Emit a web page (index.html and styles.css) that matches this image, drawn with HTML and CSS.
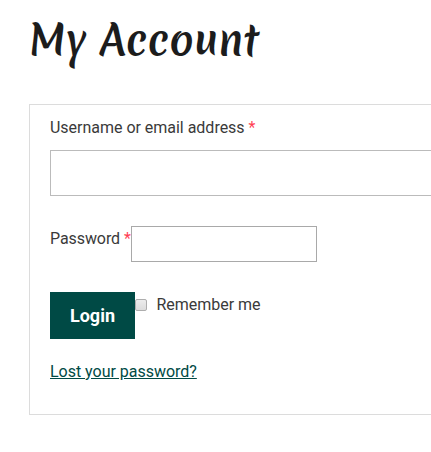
FILE: index.html
```html
<!DOCTYPE html>
<html lang="en">
<head>
<meta charset="utf-8">
<title>My Account</title>
<link rel="stylesheet" href="styles.css">
</head>
<body>
<main class="account">
  <h1 class="title">My Account</h1>
  <form class="login">
    <div class="field">
      <label for="username">Username or email address <span class="required">*</span></label>
      <input class="input input-wide" id="username" type="text">
    </div>
    <div class="password-row">
      <label class="password-label" for="password">Password <span class="required">*</span></label>
      <input class="input input-password" id="password" type="password">
    </div>
    <div class="actions">
      <button class="button" type="button">Login</button>
      <label class="remember"><input class="checkbox" type="checkbox"><span>Remember me</span></label>
    </div>
    <a class="lost" href="#">Lost your password?</a>
  </form>
</main>
</body>
</html>
```

FILE: styles.css
```css
* {
  box-sizing: border-box;
}

body {
  margin: 0;
  background: #fff;
  color: #3a3a3a;
  font: 400 16px/26px Roboto, sans-serif;
  letter-spacing: -0.02px;
}

.account {
  padding: 10px 0 0 29px;
}

.title {
  width: max-content;
  margin: 0 0 34px;
  color: #1c1c1c;
  font: 700 40px/60px Merienda, Lato, sans-serif;
  letter-spacing: 0;
}

.login {
  height: 311px;
  padding: 10px 0 10px 20px;
  border: 1px solid #dcdcdc;
  border-right: 0;
}

.field label {
  display: block;
  margin-bottom: 9px;
}

.required {
  color: #ff3f55;
}

.input {
  display: block;
  margin: 0;
  padding: 0 10px;
  border: 1px solid #bbb;
  border-radius: 0;
  background: #fff;
  outline: none;
}

.input-wide {
  width: 100%;
  height: 46px;
  border-right: 0;
}

.password-row {
  display: flex;
  align-items: flex-start;
  margin-top: 30px;
}

.password-label {
  width: 81px;
  white-space: nowrap;
  letter-spacing: -0.08px;
}

.input-password {
  width: 186px;
  height: 36px;
  border-color: #a9a9a9;
}

.actions {
  display: flex;
  align-items: flex-start;
  margin-top: 30px;
}

.button {
  width: 85px;
  height: 47px;
  padding: 0;
  border: 0;
  background: #004a45;
  color: #fff;
  font: 700 18px/47px Roboto, sans-serif;
}

.remember {
  display: flex;
  align-items: center;
}

.checkbox {
  appearance: none;
  width: 12px;
  height: 12px;
  margin: 0 9.5px 0 0;
  border: 1px solid #adadad;
  border-radius: 2px;
  background: linear-gradient(#ececec, #dcdcdc);
}

.lost {
  display: inline-block;
  margin-top: 20px;
  color: #004a45;
  text-decoration: underline;
}
```
